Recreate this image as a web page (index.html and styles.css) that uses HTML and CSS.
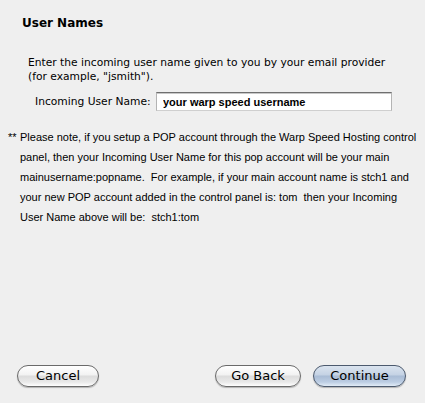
FILE: index.html
```html
<!DOCTYPE html>
<html lang="en">
<head>
  <meta charset="UTF-8" />
  <title>User Names</title>
  <link rel="stylesheet" href="styles.css">
</head>
<body>
  <div class="pane">
    <h1 class="title">User Names</h1>
    <p class="intro">Enter the incoming user name given to you by your email provider<br>(for example, "jsmith").</p>
    <div class="field">
      <label for="user">Incoming User Name:</label>
      <input id="user" type="text" value="your warp speed username" />
    </div>
    <p class="note">
      <span class="mark">**</span>Please note, if you setup a POP account through the Warp Speed Hosting control<br>
      panel, then your Incoming User Name for this pop account will be your main<br>
      mainusername:popname.&nbsp; For example, if your main account name is stch1 and<br>
      your new POP account added in the control panel is: tom&nbsp; then your Incoming<br>
      User Name above will be:&nbsp; stch1:tom
    </p>
    <div class="actions">
      <button class="cancel">Cancel</button>
      <button>Go Back</button>
      <button class="default">Continue</button>
    </div>
  </div>
</body>
</html>
```

FILE: styles.css
```css
* { box-sizing: border-box; }
body {
  margin: 0;
  background: #efefef;
  color: #000;
  font-family: "Lucida Grande", "DejaVu Sans", sans-serif;
}
.pane {
  height: 403px;
  display: flex;
  flex-direction: column;
  padding: 16px 0 0 0;
}
.title {
  margin: 0 0 0 22px;
  font-size: 12px;
  font-weight: bold;
  line-height: 15px;
}
.intro {
  margin: 25px 0 0 28px;
  font-size: 10.7px;
  line-height: 14px;
  white-space: nowrap;
}
.field {
  display: flex;
  align-items: center;
  margin: 8px 0 0 35px;
}
.field label {
  font-size: 10.7px;
  width: 121px;
  white-space: nowrap;
}
.field input {
  width: 236px;
  height: 19px;
  margin: 0;
  padding: 1px 6px 0;
  font-family: "Liberation Sans", Arial, sans-serif;
  font-size: 11px;
  font-weight: bold;
  color: #000;
  background: #fff;
  border: 1px solid #b4b4b4;
  border-top-color: #6f6f6f;
  border-bottom-color: #cfcfcf;
  box-shadow: inset 0 1px 0 #c8c8c8;
  outline: none;
}
.note {
  margin: 16px 0 0 20px;
  font-family: "Liberation Sans", Arial, sans-serif;
  font-size: 11px;
  line-height: 20px;
  white-space: nowrap;
  position: relative;
}
.mark {
  position: absolute;
  left: -12px;
}
.actions {
  margin-top: auto;
  display: flex;
  align-items: center;
  gap: 12px;
  padding: 0 19px 16px 17px;
}
.actions button {
  height: 22px;
  width: 86px;
  padding: 0 0 1px;
  font-family: "Lucida Grande", "DejaVu Sans", sans-serif;
  font-size: 13px;
  color: #000;
  border: 1px solid #6a6a6a;
  border-radius: 11px;
  background: linear-gradient(#ffffff, #f2f2f2 45%, #dcdcdc 50%, #e9e9e9 80%, #ffffff);
  box-shadow: 0 1px 1px rgba(0,0,0,0.25);
}
.actions .cancel {
  width: 82px;
  margin-right: auto;
}
.actions .default {
  width: 93px;
  border-color: #4c5a6e;
  background: linear-gradient(#dbe4ef, #c4d2e4 45%, #a9bcd5 50%, #bccde3 80%, #e2ecf7);
}
```
